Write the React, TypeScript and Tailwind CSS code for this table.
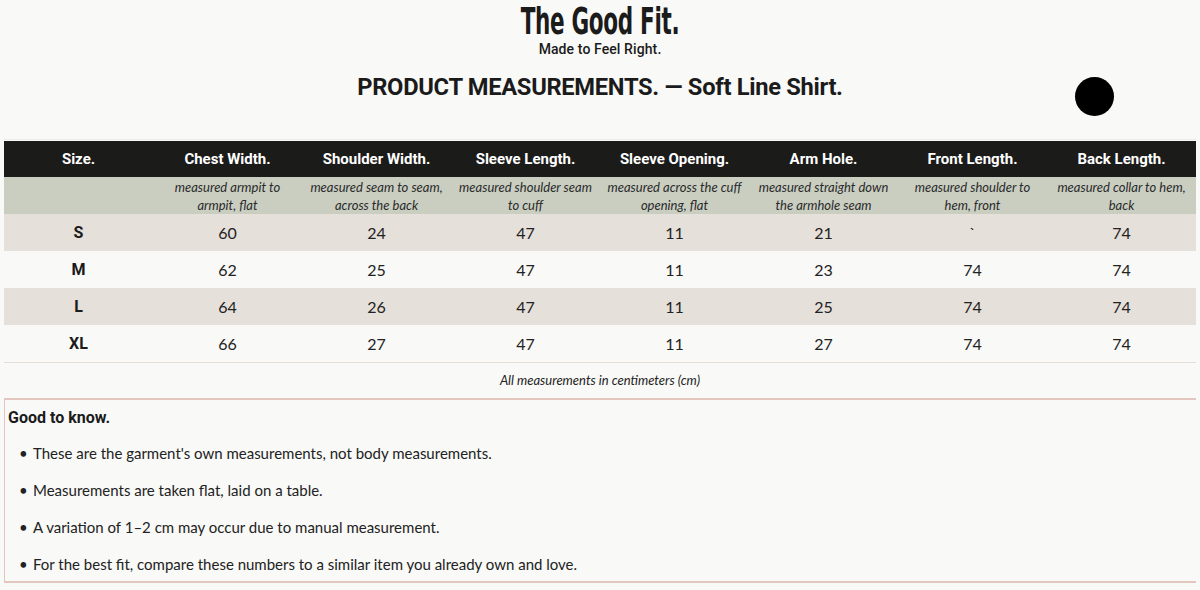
import React from "react";

const cols = [
  { h: "Size.", s: ["", ""] },
  { h: "Chest Width.", s: ["measured armpit to", "armpit, flat"] },
  { h: "Shoulder Width.", s: ["measured seam to seam,", "across the back"] },
  { h: "Sleeve Length.", s: ["measured shoulder seam", "to cuff"] },
  { h: "Sleeve Opening.", s: ["measured across the cuff", "opening, flat"] },
  { h: "Arm Hole.", s: ["measured straight down", "the armhole seam"] },
  { h: "Front Length.", s: ["measured shoulder to", "hem, front"] },
  { h: "Back Length.", s: ["measured collar to hem,", "back"] },
];

const rows = [
  ["S", "60", "24", "47", "11", "21", "`", "74"],
  ["M", "62", "25", "47", "11", "23", "74", "74"],
  ["L", "64", "26", "47", "11", "25", "74", "74"],
  ["XL", "66", "27", "47", "11", "27", "74", "74"],
];

const notes = [
  "These are the garment's own measurements, not body measurements.",
  "Measurements are taken flat, laid on a table.",
  "A variation of 1–2 cm may occur due to manual measurement.",
  "For the best fit, compare these numbers to a similar item you already own and love.",
];

const din = "font-['Roboto',sans-serif]";
const body = "font-['Lato',sans-serif]";

export default function App() {
  return (
    <div className="relative w-[1200px] h-[590px] overflow-hidden bg-[#f9f9f7] text-[#1b1b1b]">
      <div className="flex flex-col items-center pt-[2px]">
        <div className="h-[38px] flex items-center justify-center">
          <span className="inline-block scale-x-[0.63] font-['Liberation_Sans_Narrow','DejaVu_Sans_Condensed',sans-serif] font-bold text-[38px] leading-[38px] tracking-[-0.5px]">
            The Good Fit.
          </span>
        </div>
        <div className={`${din} font-medium text-[14px] leading-[18px] tracking-[0.1px]`}>Made to Feel Right.</div>
        <div className={`${din} font-bold text-[23.7px] leading-[28px] mt-[15px] tracking-[-0.3px]`}>
          PRODUCT MEASUREMENTS. — Soft Line Shirt.
        </div>
      </div>

      <div className="absolute left-[1075px] top-[77px] w-[39px] h-[39px] rounded-full bg-black" />

      <div className="mx-[4px] mt-[38px]">
        <div className="border-t border-[#ececea] mb-[1px]" />
        <div className="grid grid-cols-8 bg-[#1b1b1a] h-[36px] items-center">
          {cols.map((c) => (
            <div key={c.h} className={`${din} font-bold text-[15px] text-white text-center`}>
              {c.h}
            </div>
          ))}
        </div>
        <div className="grid grid-cols-8 bg-[#c9cec1] h-[37px] items-center">
          {cols.map((c) => (
            <div key={c.h} className={`${body} italic text-[13px] leading-[18px] text-[#2a2a2a] text-center`}>
              <div className="whitespace-nowrap">{c.s[0]}</div>
              <div className="whitespace-nowrap">{c.s[1]}</div>
            </div>
          ))}
        </div>
        {rows.map((r, i) => (
          <div
            key={r[0]}
            className={`grid grid-cols-8 h-[37px] items-center ${i % 2 === 0 ? "bg-[#e6e0da]" : "bg-[#f9f9f7]"}`}
          >
            {r.map((v, j) => (
              <div
                key={j}
                className={
                  j === 0
                    ? `${din} font-bold text-[16px] text-center text-[#1b1b1b]`
                    : `${body} text-[16px] text-center text-[#222]`
                }
              >
                {v}
              </div>
            ))}
          </div>
        ))}
        <div className="border-t border-[#e6ddd5] h-[36px] flex items-center justify-center">
          <span className={`${body} italic text-[13px] text-[#222]`}>All measurements in centimeters (cm)</span>
        </div>
        <div className="border-t-2 border-b-2 border-l border-[#e3c6be] h-[185px] pl-[3px]">
          <div className={`${din} font-bold text-[16px] leading-[20px] pt-[8px]`}>Good to know.</div>
          <ul className="ml-[11px] mt-[7px]">
            {notes.map((n) => (
              <li key={n} className={`${body} flex items-center h-[37px] text-[15px] text-[#222]`}>
                <span className="w-[14px]">•</span>
                <span>{n}</span>
              </li>
            ))}
          </ul>
        </div>
      </div>
    </div>
  );
}
